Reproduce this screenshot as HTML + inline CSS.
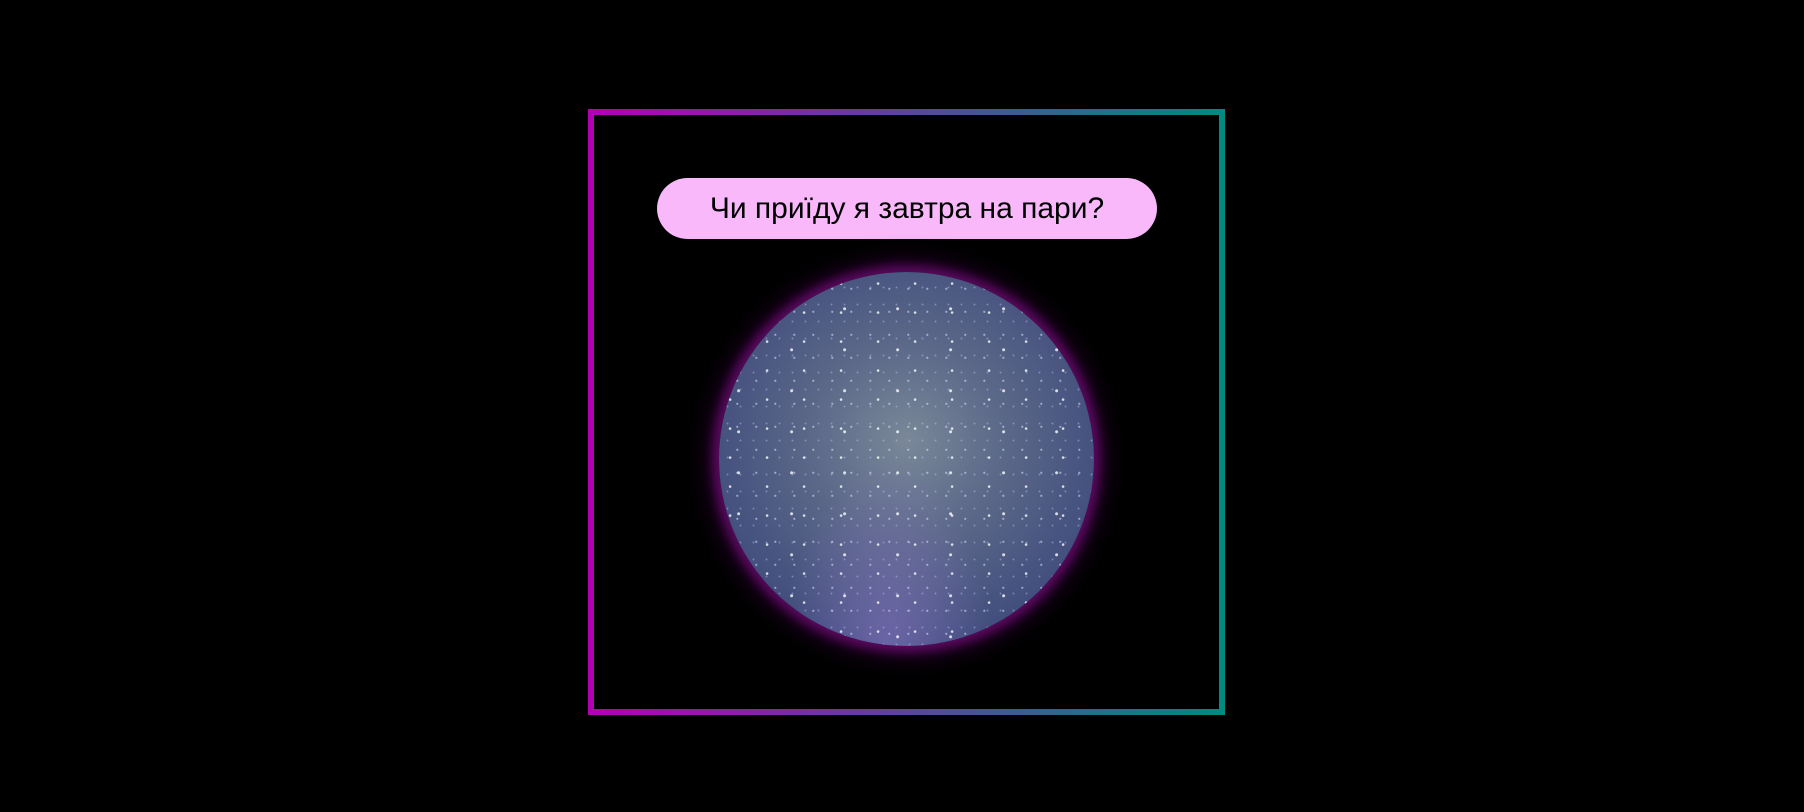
<!DOCTYPE html>
<html><head><meta charset="utf-8"><style>
html,body{margin:0;padding:0;background:#000;width:1804px;height:812px;overflow:hidden}
.frame{position:absolute;left:588px;top:109px;width:637px;height:606px;box-sizing:border-box;border:6px solid;border-image:linear-gradient(90deg,#b400b4,#008a80) 1}
.pill{position:absolute;left:657px;top:178px;width:500px;height:61px;border-radius:31px;background:#f8b8fa;color:#000;font:30px "Liberation Sans","DejaVu Sans",sans-serif;text-align:center;line-height:61px}
.orb{position:absolute;left:719px;top:272px;width:375px;height:374px;border-radius:50%;
box-shadow:0 0 10px 6px #5a0a5e,0 0 24px 10px #2a0030;
background:
radial-gradient(circle at 30% 40%,rgba(255,255,255,.8) 0 1px,transparent 1.6px) 0 0/37px 29px,
radial-gradient(circle at 70% 60%,rgba(220,230,255,.55) 0 0.8px,transparent 1.4px) 5px 3px/19px 23px,
radial-gradient(circle at 50% 50%,rgba(200,210,255,.4) 0 0.7px,transparent 1.2px) 2px 7px/13px 17px,
radial-gradient(circle at 20% 80%,rgba(255,255,255,.8) 0 1.2px,transparent 1.8px) 9px 4px/53px 41px,
radial-gradient(ellipse at 45% 100%,rgba(140,120,200,.55),transparent 35%),
radial-gradient(circle at 50% 45%,#7a8899 0%,#5b6888 35%,#44507e 70%,#34427a 88%,#1c2a5a 91%,#1a2650 100%)}
</style></head><body>
<div class="frame"></div>
<div class="pill">Чи приїду я завтра на пари?</div>
<div class="orb"></div>
</body></html>
